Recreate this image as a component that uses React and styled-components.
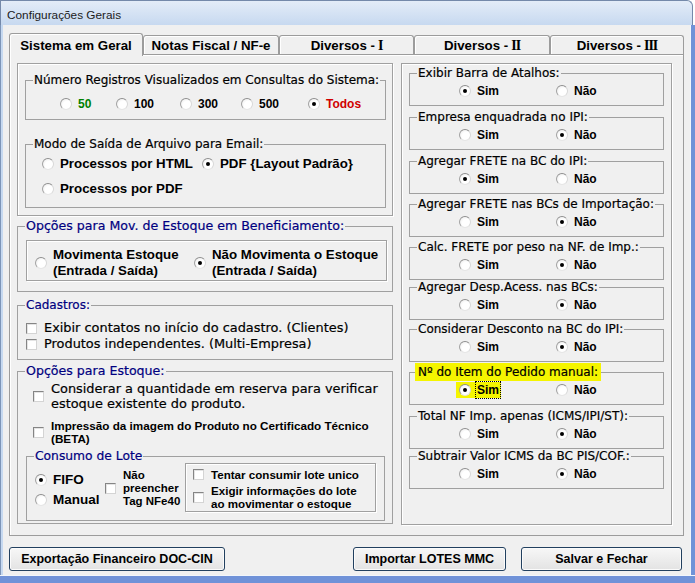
import React from 'react';
import styled, { createGlobalStyle } from 'styled-components';

const BOLD = '"Liberation Sans", Arial, sans-serif';
const REG = '"DejaVu Sans", Verdana, sans-serif';
const NAVY = '#000080';

const GlobalStyle = createGlobalStyle`
  * { box-sizing: border-box; }
  html, body { margin: 0; padding: 0; background: #ffffff; }
  body { font-family: ${REG}; font-size: 12px; color: #000; }
`;

const Window = styled.div`
  width: 695px;
  height: 583px;
  display: flex;
  flex-direction: column;
  overflow: hidden;
`;

const TitleBar = styled.div`
  flex: none;
  height: 25px;
  margin-right: 2px;
  display: flex;
  align-items: center;
  padding: 4px 0 0 6px;
  background: linear-gradient(#e3ecf8, #c7d9f0);
  border: 1px solid #7489aa;
  border-bottom: none;
  border-radius: 0 6px 0 0;
  font-family: ${BOLD};
  font-size: 11.8px;
  color: #1b1b1b;
`;

const Body = styled.div`
  flex: 1;
  display: flex;
  min-height: 0;
`;

const LeftEdge = styled.div`
  flex: none;
  width: 3px;
  background: #c6d9f1;
  border-left: 1px solid #7d95b8;
`;

const RightEdge = styled.div`
  flex: none;
  width: 5px;
  background: #7092d8;
  border-left: 1px solid #f2f6fb;
`;

const BottomEdge = styled.div`
  flex: none;
  height: 8px;
  background: #7092d8;
  border-top: 1px solid #f2f6fb;
`;

const Client = styled.div`
  flex: 1;
  display: flex;
  flex-direction: column;
  padding: 8px 6px 0 6px;
  background: #f0f0f0;
`;

const TabRow = styled.div`
  display: flex;
  align-items: flex-end;
  height: 21px;
  position: relative;
  z-index: 1;
`;

const Tab = styled.div`
  flex: none;
  width: ${p => p.$w}px;
  height: ${p => (p.$active ? 23 : 19)}px;
  margin-bottom: ${p => (p.$active ? -2 : 0)}px;
  display: flex;
  align-items: center;
  justify-content: center;
  padding-top: ${p => (p.$active ? 0 : 1)}px;
  background: #f0f0f0;
  border: 1px solid #9c9c9c;
  border-bottom: none;
  border-radius: 3px 3px 0 0;
  box-shadow: inset 1px 1px 0 #ffffff;
  font-family: ${BOLD};
  font-weight: 700;
  font-size: 13.3px;
  white-space: nowrap;
`;

const Numeral = styled.span`
  font-family: "Liberation Serif", serif;
  font-weight: 700;
  font-size: 14px;
  letter-spacing: -1px;
  margin-left: 3px;
`;

const TabPanel = styled.div`
  height: 482px;
  display: flex;
  align-items: flex-start;
  gap: 8px;
  padding: 8px 11px 0 7px;
  border: 1px solid #9c9c9c;
  box-shadow: inset 1px 1px 0 #ffffff;
`;

const Column = styled.div`
  flex: none;
  width: ${p => p.$w}px;
  display: flex;
  flex-direction: column;
`;

const Sunken = styled.div`
  border: 1px solid #a0a0a0;
  box-shadow: inset 1px 1px 0 #ffffff, 1px 1px 0 #ffffff;
`;

const TopPanel = styled(Sunken)`
  padding: 9px 6px 7px 7px;
`;

const RightPanel = styled(Sunken)`
  height: 462px;
  padding: 2px 7px 0 7px;
`;

const Group = styled.fieldset`
  margin: ${p => p.$mt || 0}px ${p => p.$mr || 0}px 0 ${p => p.$ml || 0}px;
  padding: 0 0 ${p => p.$pb || 0}px 0;
  border: 1px solid #a0a0a0;
  min-width: 0;
`;

const Legend = styled.legend`
  margin-left: 7px;
  padding: 0 1px;
  font-family: ${REG};
  font-size: ${p => p.$size || 12}px;
  line-height: 14px;
  color: ${p => p.$color || '#000'};
  -webkit-text-stroke: 0.2px currentColor;
  white-space: nowrap;
  background: ${p => (p.$mark ? '#f5f500' : 'transparent')};
  box-shadow: ${p => (p.$mark ? '0 0 0 2px #f5f500' : 'none')};
`;

const OptionRow = styled.div`
  display: flex;
  align-items: center;
  height: 14px;
  margin-top: ${p => p.$mt || 0}px;
  padding-left: ${p => p.$pl || 0}px;
  margin-bottom: ${p => p.$mb || 0}px;
`;

const CheckList = styled.div`
  display: flex;
  flex-direction: column;
  margin-top: ${p => p.$mt || 0}px;
  padding-left: ${p => p.$pl || 0}px;
  margin-bottom: ${p => p.$mb || 0}px;
`;

const Choice = styled.div`
  flex: none;
  display: flex;
  align-items: center;
  width: ${p => (p.$w ? `${p.$w}px` : 'auto')};
  margin-top: ${p => p.$mt || 0}px;
`;

const Highlight = styled.span`
  display: flex;
  align-items: center;
  background: #f5f500;
  padding: 1px 2px 1px 3px;
  margin: -1px -2px -1px -3px;
`;

const RadioMark = styled.span`
  flex: none;
  width: 12px;
  height: 12px;
  margin-right: 6px;
  border-radius: 50%;
  border: 1px solid;
  border-color: #8e8e8e #d8d8d8 #e6e6e6 #a2a2a2;
  background: radial-gradient(circle at 62% 62%, #ffffff 45%, #e6e6e6 100%);
  display: flex;
  align-items: center;
  justify-content: center;
  &::after {
    content: '';
    width: 4px;
    height: 4px;
    border-radius: 50%;
    background: ${p => (p.$on ? '#000' : 'transparent')};
  }
`;

const CheckMark = styled.span`
  flex: none;
  width: 11px;
  height: 11px;
  margin-right: 7px;
  border: 1px solid;
  border-color: #858585 #d4d4d4 #d4d4d4 #858585;
  background: #ffffff;
  box-shadow: inset 1px 1px 0 #e4e4e4;
`;

const Caption = styled.span`
  font-family: ${p => (p.$bold ? BOLD : REG)};
  font-weight: ${p => (p.$bold ? 700 : 400)};
  font-size: ${p => p.$size}px;
  line-height: ${p => p.$lh}px;
  color: ${p => p.$color || '#000'};
  -webkit-text-stroke: ${p => (p.$bold ? 0 : 0.2)}px currentColor;
  white-space: nowrap;
  outline: ${p => (p.$focus ? '1px dotted #000' : 'none')};
  outline-offset: 1px;
`;

const InnerFrame = styled(Sunken)`
  height: 41px;
  margin: 7px 5px 10px 8px;
  display: flex;
  align-items: center;
  padding: 4px 0 0 8px;
`;

const LoteBody = styled.div`
  display: flex;
  align-items: flex-start;
  padding: 0 0 8px 8px;
`;

const LoteRadios = styled.div`
  flex: none;
  width: 70px;
  margin-top: 7px;
  display: flex;
  flex-direction: column;
`;

const LoteFrame = styled(Sunken)`
  flex: none;
  width: 191px;
  height: 49px;
  padding: 4px 0 0 7px;
`;

const ButtonRow = styled.div`
  display: flex;
  align-items: center;
  gap: 15px;
  margin-top: 11px;
  padding-right: 2px;
`;

const Button = styled.button`
  flex: none;
  width: ${p => p.$w}px;
  height: 24px;
  margin-left: ${p => (p.$push ? 'auto' : '0')};
  padding: 0;
  border: 1px solid #22405f;
  border-radius: 3px;
  background: linear-gradient(#f7f7f7, #e3e3e3);
  box-shadow: inset 0 0 0 1px #fbfbfb;
  font-family: ${BOLD};
  font-weight: 700;
  font-size: 12.5px;
  color: #000;
`;

function Radio({ on, w, size = 12, lh = 14, color, mark, focus, children }) {
  const inner = (
    <>
      <RadioMark $on={on} />
      <Caption $bold $size={size} $lh={lh} $color={color} $focus={focus}>
        {children}
      </Caption>
    </>
  );
  return <Choice $w={w}>{mark ? <Highlight>{inner}</Highlight> : inner}</Choice>;
}

function Check({ w, mt, bold, size = 12.9, lh = 14, children }) {
  return (
    <Choice $w={w} $mt={mt}>
      <CheckMark />
      <Caption $bold={bold} $size={size} $lh={lh}>
        {children}
      </Caption>
    </Choice>
  );
}

const tabs = [
  { label: 'Sistema em Geral', w: 134 },
  { label: 'Notas Fiscal / NF-e', w: 136 },
  { label: <>Diversos -<Numeral>I</Numeral></>, w: 135 },
  { label: <>Diversos -<Numeral>II</Numeral></>, w: 136 },
  { label: <>Diversos -<Numeral>III</Numeral></>, w: 134 },
];

const rightGroups = [
  { title: 'Exibir Barra de Atalhos:', sim: true, mt: 0 },
  { title: 'Empresa enquadrada no IPI:', sim: false, mt: 4 },
  { title: 'Agregar FRETE na BC do IPI:', sim: true, mt: 4 },
  { title: 'Agregar FRETE nas BCs de Importação:', sim: false, mt: 3 },
  { title: 'Calc. FRETE por peso na NF. de Imp.:', sim: false, mt: 3 },
  { title: 'Agregar Desp.Acess. nas BCs:', sim: false, mt: 0 },
  { title: 'Considerar Desconto na BC do IPI:', sim: false, mt: 2 },
  { title: 'Nº do Item do Pedido manual:', sim: true, mt: 3, mark: true },
  { title: 'Total NF Imp. apenas (ICMS/IPI/ST):', sim: false, mt: 4 },
  { title: 'Subtrair Valor ICMS da BC PIS/COF.:', sim: false, mt: 0 },
];

export default function App() {
  return (
    <>
      <GlobalStyle />
      <Window>
        <TitleBar>Configurações Gerais</TitleBar>
        <Body>
          <LeftEdge />
          <Client>
            <TabRow>
              {tabs.map((t, i) => (
                <Tab key={i} $w={t.w} $active={i === 0}>
                  {t.label}
                </Tab>
              ))}
            </TabRow>
            <TabPanel>
              <Column $w={376}>
                <TopPanel>
                  <Group>
                    <Legend>Número Registros Visualizados em Consultas do Sistema:</Legend>
                    <OptionRow $mt={10} $pl={34} $mb={8}>
                      <Radio w={56} color="#008000">50</Radio>
                      <Radio w={64}>100</Radio>
                      <Radio w={61}>300</Radio>
                      <Radio w={67}>500</Radio>
                      <Radio on color="#d00000">Todos</Radio>
                    </OptionRow>
                  </Group>
                  <Group $mt={17}>
                    <Legend>Modo de Saída de Arquivo para Email:</Legend>
                    <OptionRow $mt={6} $pl={16}>
                      <Radio w={160} size={13.3}>Processos por HTML</Radio>
                      <Radio on size={13.3}>PDF {'{'}Layout Padrão{'}'}</Radio>
                    </OptionRow>
                    <OptionRow $mt={11} $pl={16} $mb={11}>
                      <Radio size={13.3}>Processos por PDF</Radio>
                    </OptionRow>
                  </Group>
                </TopPanel>

                <Group $mt={3}>
                  <Legend $color={NAVY} $size={12.6}>
                    Opções para Mov. de Estoque em Beneficiamento:
                  </Legend>
                  <InnerFrame>
                    <Radio w={159} size={13.3} lh={15.5}>
                      Movimenta Estoque
                      <br />
                      (Entrada / Saída)
                    </Radio>
                    <Radio on size={13.3} lh={15.5}>
                      Não Movimenta o Estoque
                      <br />
                      (Entrada / Saída)
                    </Radio>
                  </InnerFrame>
                </Group>

                <Group $mt={6}>
                  <Legend $color={NAVY}>Cadastros:</Legend>
                  <CheckList $mt={8} $pl={8} $mb={7}>
                    <Check lh={16}>Exibir contatos no início do cadastro. (Clientes)</Check>
                    <Check lh={16}>Produtos independentes. (Multi-Empresa)</Check>
                  </CheckList>
                </Group>

                <Group $mt={4} $pb={2}>
                  <Legend $color={NAVY} $size={12.6}>Opções para Estoque:</Legend>
                  <CheckList $mt={4} $pl={15}>
                    <Check lh={14.5}>
                      Considerar a quantidade em reserva para verificar
                      <br />
                      estoque existente do produto.
                    </Check>
                    <Check mt={9} bold size={11.7} lh={12.5}>
                      Impressão da imagem do Produto no Certificado Técnico
                      <br />
                      (BETA)
                    </Check>
                  </CheckList>
                  <Group $mt={4} $ml={8} $mr={7}>
                    <Legend $color={NAVY} $size={12.3}>Consumo de Lote</Legend>
                    <LoteBody>
                      <LoteRadios>
                        <Radio on size={13.5} lh={20}>FIFO</Radio>
                        <Radio size={13.5} lh={20}>Manual</Radio>
                      </LoteRadios>
                      <Check w={80} mt={6} bold size={11.5} lh={12.8}>
                        Não
                        <br />
                        preencher
                        <br />
                        Tag NFe40
                      </Check>
                      <LoteFrame>
                        <Check bold size={11.6} lh={13}>Tentar consumir lote unico</Check>
                        <Check mt={3} bold size={11.6} lh={13}>
                          Exigir informações do lote
                          <br />
                          ao movimentar o estoque
                        </Check>
                      </LoteFrame>
                    </LoteBody>
                  </Group>
                </Group>
              </Column>

              <Column $w={271}>
                <RightPanel>
                  {rightGroups.map(g => (
                    <Group key={g.title} $mt={g.mt}>
                      <Legend $mark={g.mark}>{g.title}</Legend>
                      <OptionRow $mt={4} $pl={49} $mb={7}>
                        <Radio w={97} on={g.sim} mark={g.mark} focus={g.mark}>
                          Sim
                        </Radio>
                        <Radio on={!g.sim}>Não</Radio>
                      </OptionRow>
                    </Group>
                  ))}
                </RightPanel>
              </Column>
            </TabPanel>

            <ButtonRow>
              <Button $w={216}>Exportação Financeiro DOC-CIN</Button>
              <Button $w={153} $push>Importar LOTES MMC</Button>
              <Button $w={161}>Salvar e Fechar</Button>
            </ButtonRow>
          </Client>
          <RightEdge />
        </Body>
        <BottomEdge />
      </Window>
    </>
  );
}
